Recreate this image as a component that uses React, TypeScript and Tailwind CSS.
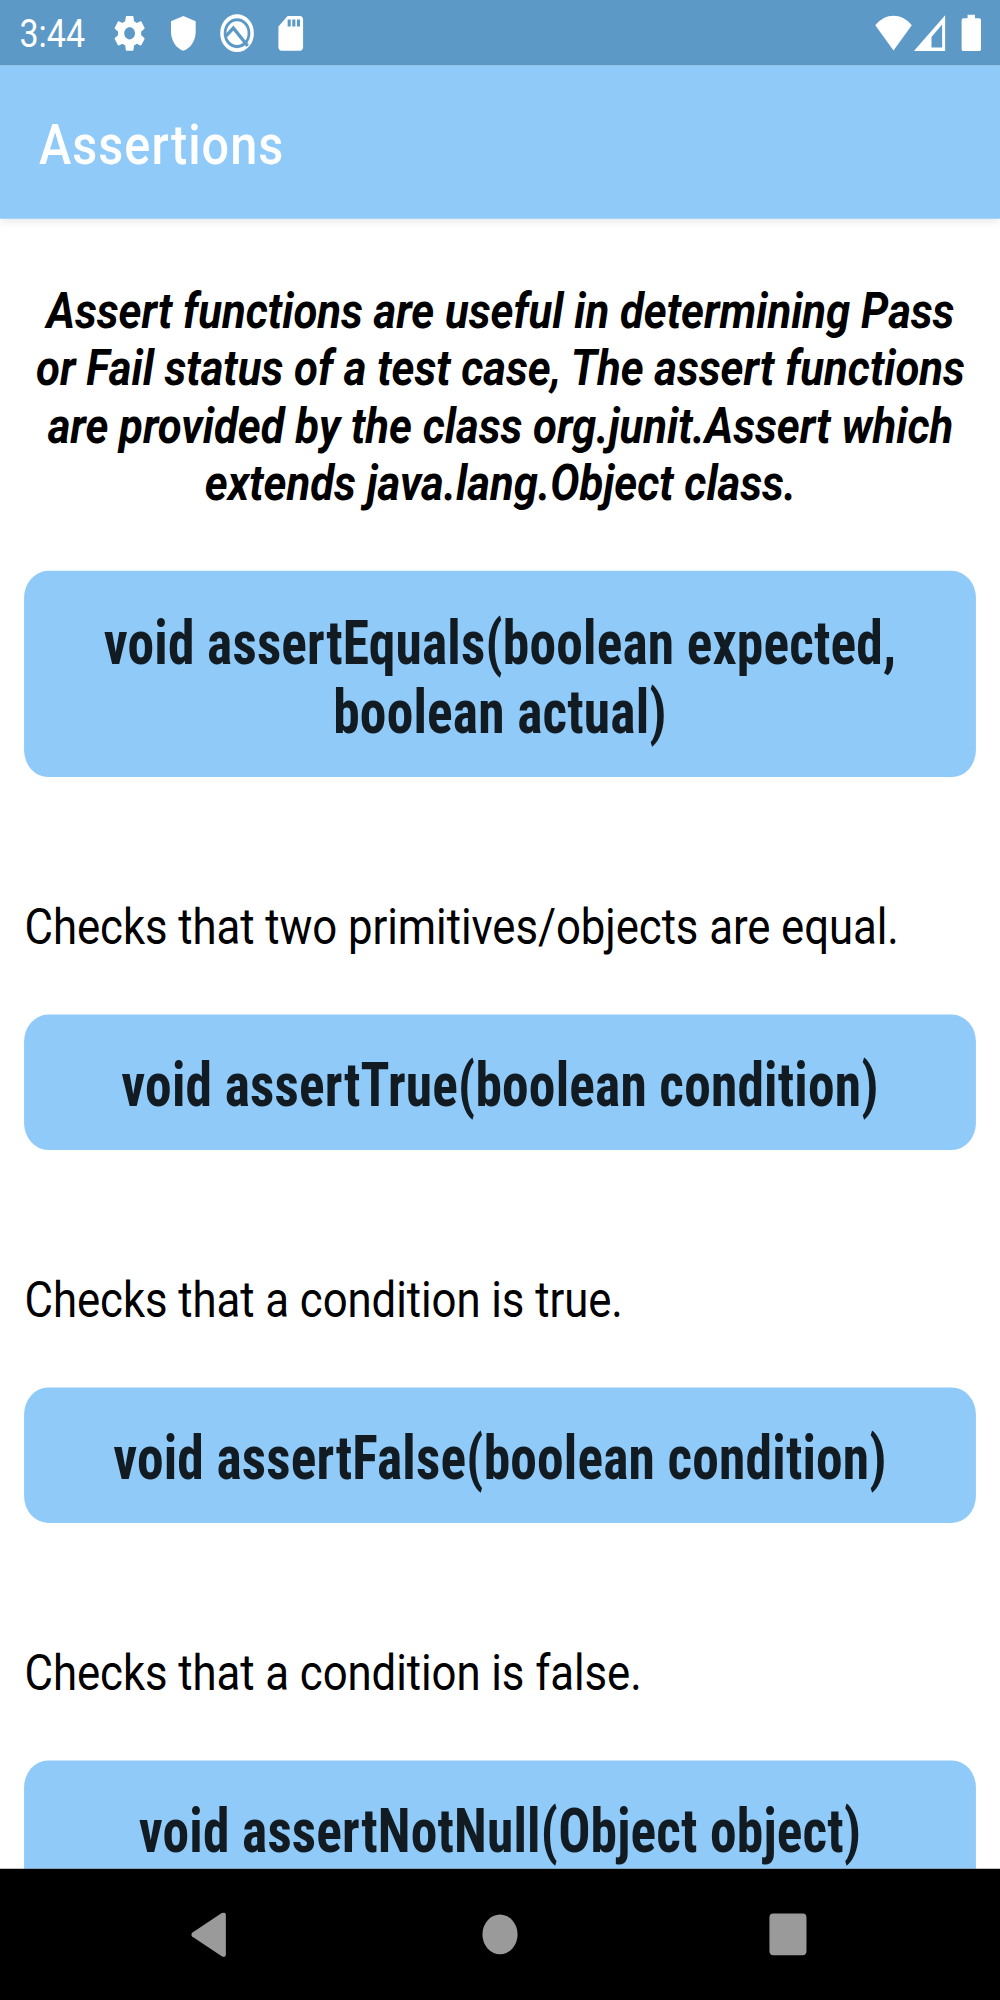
import React from "react";

type Entry = { title: string[]; description: string };

const entries: Entry[] = [
  {
    title: ["void assertEquals(boolean expected,", "boolean actual)"],
    description: "Checks that two primitives/objects are equal.",
  },
  {
    title: ["void assertTrue(boolean condition)"],
    description: "Checks that a condition is true.",
  },
  {
    title: ["void assertFalse(boolean condition)"],
    description: "Checks that a condition is false.",
  },
  { title: ["void assertNotNull(Object object)"], description: "" },
];

const intro = [
  "Assert functions are useful in determining Pass",
  "or Fail status of a test case, The assert functions",
  "are provided by the class org.junit.Assert which",
  "extends java.lang.Object class.",
];

function StatusBar() {
  return (
    <div className="flex h-[63px] shrink-0 items-center bg-[#5d99c6] pl-[21px] pr-[20px] text-white">
      <span className="w-[99px] whitespace-nowrap pt-[2px] text-[36.75px] leading-[43px]">3:44</span>
      <div className="flex items-center gap-[18px]">
        <svg className="size-[40px]" viewBox="0 0 24 24" fill="currentColor">
          <path d="M19.43 12.98c.04-.32.07-.64.07-.98s-.03-.66-.07-.98l2.11-1.65c.19-.15.24-.42.12-.64l-2-3.46c-.12-.22-.39-.3-.61-.22l-2.49 1c-.52-.4-1.08-.73-1.69-.98l-.38-2.65C14.46 2.18 14.25 2 14 2h-4c-.25 0-.46.18-.49.42l-.38 2.65c-.61.25-1.17.59-1.69.98l-2.49-1c-.23-.09-.49 0-.61.22l-2 3.46c-.13.22-.07.49.12.64l2.11 1.65c-.04.32-.07.65-.07.98s.03.66.07.98l-2.11 1.65c-.19.15-.24.42-.12.64l2 3.46c.12.22.39.3.61.22l2.49-1c.52.4 1.08.73 1.69.98l.38 2.65c.03.24.24.42.49.42h4c.25 0 .46-.18.49-.42l.38-2.65c.61-.25 1.17-.59 1.69-.98l2.49 1c.23.09.49 0 .61-.22l2-3.46c.12-.22.07-.49-.12-.64l-2.11-1.65zM12 15.5c-1.93 0-3.5-1.57-3.5-3.5s1.57-3.5 3.5-3.5 3.5 1.57 3.5 3.5-1.57 3.5-3.5 3.5z" />
        </svg>
        <svg className="size-[40px]" viewBox="0 0 24 24" fill="currentColor">
          <path d="M12 2L4 5v6.09c0 5.05 3.41 9.76 8 10.91 4.59-1.15 8-5.86 8-10.91V5l-8-3z" />
        </svg>
        <svg className="size-[40px]" viewBox="0 0 40 40" fill="none" stroke="currentColor">
          <circle cx="20" cy="19.8" r="16.3" strokeWidth="3.8" />
          <circle cx="20" cy="19.8" r="11.4" fill="currentColor" stroke="none" />
          <path d="M8 22.5L16 15L31.5 32" stroke="#5d99c6" strokeWidth="3.4" />
        </svg>
        <svg className="size-[40px]" viewBox="0 0 24 24" fill="currentColor">
          <path d="M18 2h-8L4.02 8 4 20c0 1.1.9 2 2 2h12c1.1 0 2-.9 2-2V4c0-1.1-.9-2-2-2zm-6 6h-2V4h2v4zm3 0h-2V4h2v4zm3 0h-2V4h2v4z" />
        </svg>
      </div>
      <div className="ml-auto flex items-center">
        <svg className="h-[35px] w-[40px]" viewBox="0 0 40 35" fill="currentColor">
          <path d="M20 34.5L.3 10.2C6 4 13 1 20 1s14 3 19.700 9.200z" />
        </svg>
        <svg className="ml-[2px] h-[35px] w-[34px]" viewBox="0 0 34 35" fill="currentColor" fillRule="evenodd">
          <path d="M34 .5V35H0zM30.500 9.500L19 21.500V31.500H30.500z" />
        </svg>
        <svg className="ml-[17px] h-[35px] w-[22px]" viewBox="0 0 22 35" fill="currentColor">
          <path d="M7 0h8v3.500h4.500q2 0 2 2V33q0 2-2 2H2.500q-2 0-2-2V5.500q0-2 2-2H7z" />
        </svg>
      </div>
    </div>
  );
}

function AssertionItem({ title, description }: Entry) {
  return (
    <section className="shrink-0">
      <h2 className="rounded-[26px] bg-[#90caf9] pt-[35.500px] pb-[26.500px] text-center text-[57.75px] leading-[67.8px] font-bold tracking-[0.18px] text-[#111b21] [font-stretch:75%]">
        {title.map((line) => (
          <span key={line} className="block whitespace-nowrap">
            {line}
          </span>
        ))}
      </h2>
      <p className="h-[228.200px] whitespace-nowrap pt-[117.500px] pl-[0.500px] text-[47.25px] leading-[55px] tracking-[-0.08px]">
        {description}
      </p>
    </section>
  );
}

function NavigationBar() {
  return (
    <nav className="flex h-[126px] shrink-0 items-center justify-between bg-black pr-[209px] pl-[206px] text-[#9a9a9a]">
      <svg className="h-[43px] w-[38px]" viewBox="0 0 38 43" fill="currentColor">
        <path d="M1.500 19.500L33.500 .5Q38 -1 38 3V40Q38 44 33.500 42L1.500 23Q0 21.300 1.500 19.500z" />
      </svg>
      <span className="ml-[5px] size-[38px] rounded-full bg-[#9a9a9a]" />
      <span className="size-[40px] rounded-[4px] bg-[#9a9a9a]" />
    </nav>
  );
}

export default function App() {
  return (
    <div className="h-[2000px] w-[1000px] overflow-hidden bg-white">
      <div className="flex h-[1920px] w-[1080px] origin-top-left [transform:scale(0.92593,1.04167)] flex-col overflow-hidden bg-white font-['Roboto',sans-serif] text-black">
        <StatusBar />
        <header className="z-10 flex h-[147px] shrink-0 items-center bg-[#90caf9] pt-[4px] pl-[42px] shadow-[0_3px_9px_rgba(0,0,0,0.1)]">
          <h1 className="text-[52.5px] leading-[62px] font-medium tracking-[1.15px] text-white">Assertions</h1>
        </header>
        <main className="flex h-[1584px] shrink-0 flex-col overflow-hidden px-[26px]">
          <div className="mt-[62px] h-[276px] shrink-0 pl-px text-center text-[47.25px] leading-[55px] font-bold tracking-[-0.03px] italic">
            {intro.map((line) => (
              <div key={line} className="whitespace-nowrap">
                {line}
              </div>
            ))}
          </div>
          {entries.map((entry) => (
            <AssertionItem key={entry.title[0]} {...entry} />
          ))}
        </main>
        <NavigationBar />
      </div>
    </div>
  );
}
